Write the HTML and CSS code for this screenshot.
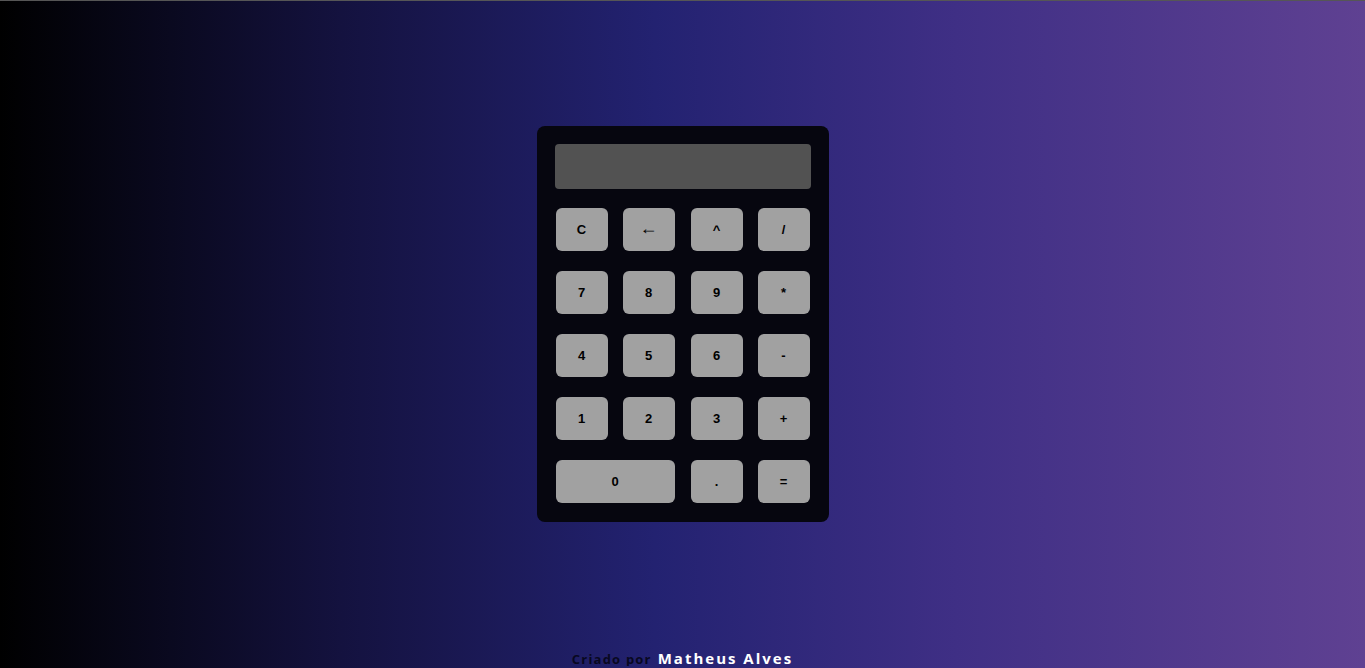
FILE: index.html
```html
<!DOCTYPE html>
<html lang="pt-BR">
<head>
<meta charset="utf-8">
<title>Calculadora</title>
<link rel="stylesheet" href="styles.css">
</head>
<body>
<main class="stage">
  <div class="calc">
    <div class="display"></div>
    <div class="keys">
      <button class="key">C</button>
      <button class="key arrow">&larr;</button>
      <button class="key">^</button>
      <button class="key">/</button>
      <button class="key">7</button>
      <button class="key">8</button>
      <button class="key">9</button>
      <button class="key">*</button>
      <button class="key">4</button>
      <button class="key">5</button>
      <button class="key">6</button>
      <button class="key">-</button>
      <button class="key">1</button>
      <button class="key">2</button>
      <button class="key">3</button>
      <button class="key">+</button>
      <button class="key wide">0</button>
      <button class="key">.</button>
      <button class="key">=</button>
    </div>
  </div>
</main>
<footer class="credit">
  <span class="by">Criado por</span><span class="name">Matheus Alves</span>
</footer>
</body>
</html>
```
FILE: styles.css
```css
html, body {
  margin: 0;
  padding: 0;
}
html {
  border-top: 1px solid #565656;
}
body {
  display: flex;
  flex-direction: column;
  min-height: 665px;
  background: linear-gradient(to right, #000000 0%, #14123f 25%, #232271 48%, #3f2f85 70%, #5f4192 100%);
  background-attachment: fixed;
  font-family: "Open Sans", "Liberation Sans", sans-serif;
}
.stage {
  flex: 1;
  display: flex;
  align-items: center;
  justify-content: center;
}
.calc {
  width: 256px;
  padding: 18px 18px 19px;
  background: #06060f;
  border-radius: 8px;
}
.display {
  height: 45px;
  background: #525252;
  border-radius: 4px;
  margin-bottom: 19px;
}
.keys {
  display: grid;
  grid-template-columns: 67px 68px 67px 52px;
  row-gap: 20px;
  margin-left: 1px;
}
.key {
  width: 52px;
  height: 43px;
  border: 0;
  border-radius: 6px;
  background: #a1a1a1;
  color: #000;
  font-family: "Liberation Sans", Arial, sans-serif;
  font-weight: bold;
  font-size: 13px;
  padding: 0;
}
.key.arrow {
  font-weight: normal;
  font-size: 18px;
  line-height: 1;
  padding-bottom: 3px;
}
.key.wide {
  grid-column: span 2;
  width: 119px;
}
.credit {
  height: 20px;
  text-align: center;
  line-height: 24px;
  white-space: nowrap;
}
.by {
  color: #080820;
  font-size: 13px;
  font-weight: 700;
  letter-spacing: 1.2px;
  margin-right: 6px;
}
.name {
  color: #ffffff;
  font-size: 15px;
  font-weight: 700;
  letter-spacing: 2px;
}
```
